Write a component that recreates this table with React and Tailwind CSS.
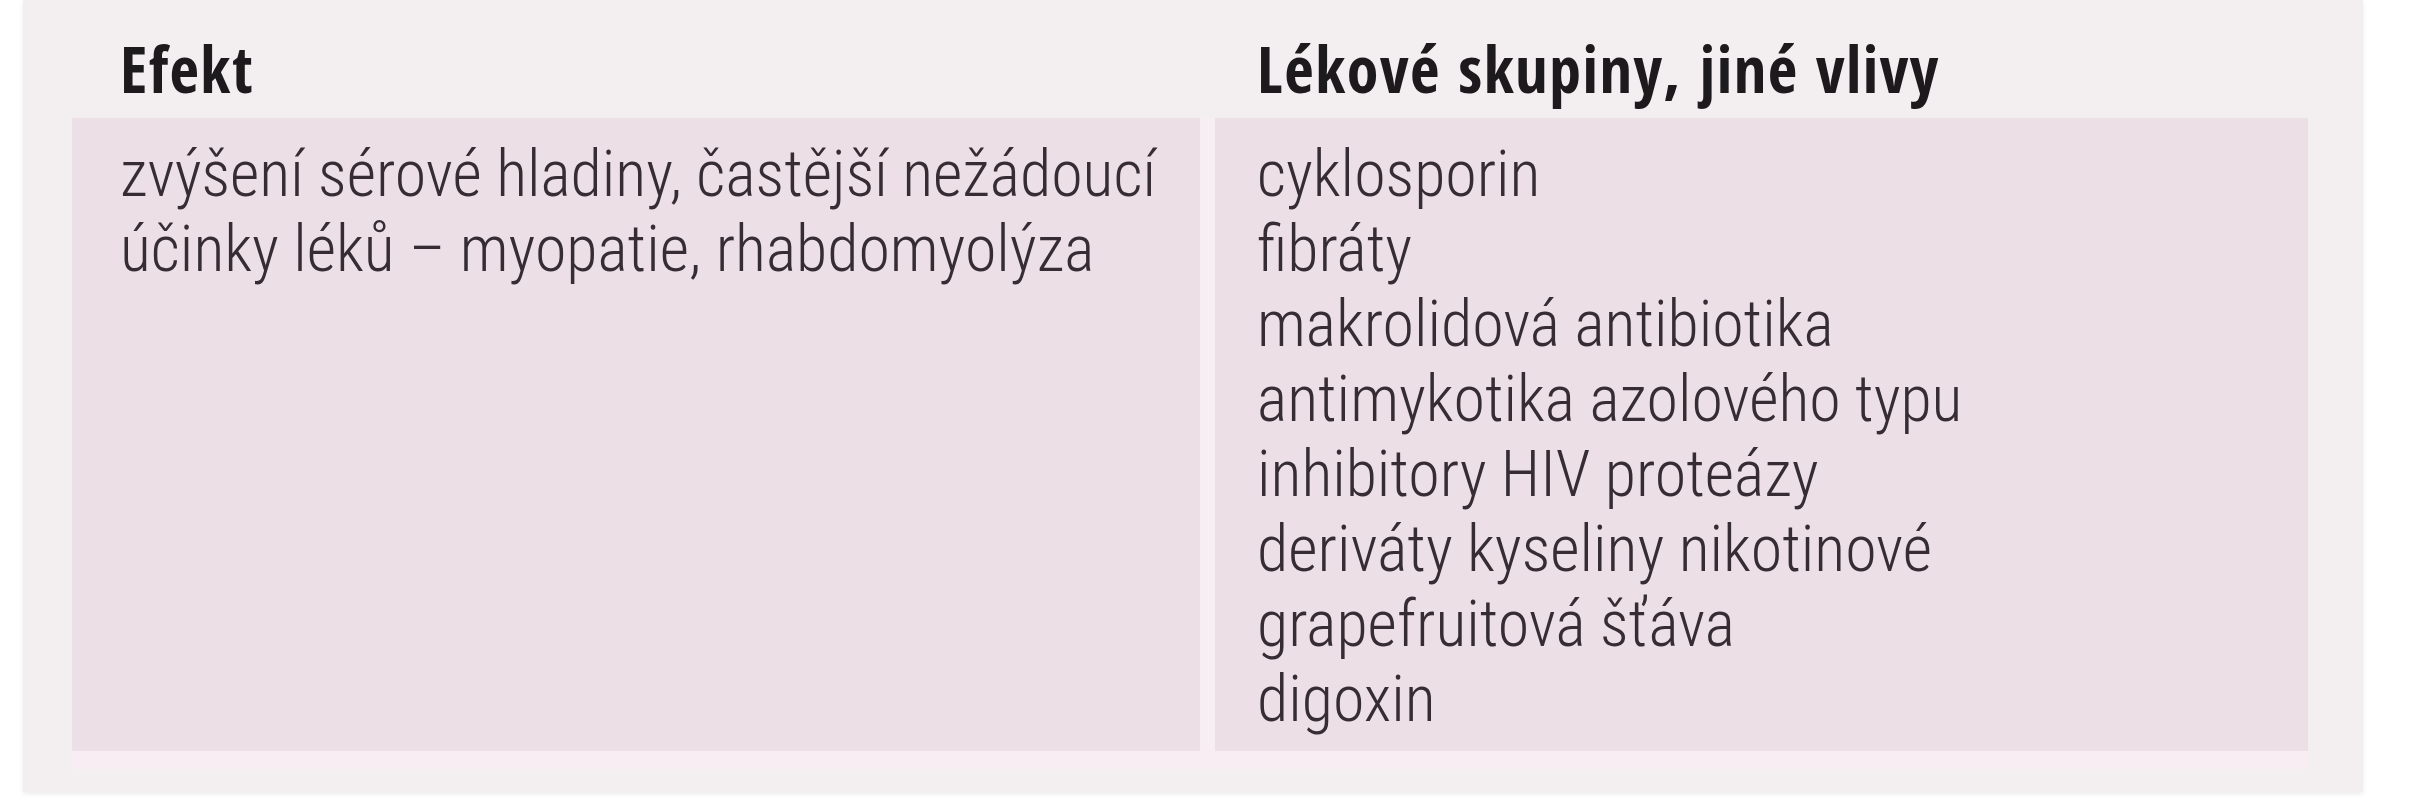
const effects = ["zvýšení sérové hladiny, častější nežádoucí", "účinky léků – myopatie, rhabdomyolýza"];

const groups = [
  "cyklosporin",
  "fibráty",
  "makrolidová antibiotika",
  "antimykotika azolového typu",
  "inhibitory HIV proteázy",
  "deriváty kyseliny nikotinové",
  "grapefruitová šťáva",
  "digoxin",
];

export default function App() {
  return (
    <div className="w-[2409px] h-[800px] bg-white">
      <div className="ml-[23px] w-[2340px] h-[792px] bg-[#f3eff1] pl-[49px] pr-[55px] shadow-[0_2px_5px_rgba(0,0,0,0.08)] flex flex-col">
        {/* header row */}
        <div className="grid grid-cols-[1128px_1093px] gap-x-[15px] h-[118px] items-end pb-[6px] font-['Open_Sans_Condensed','Open_Sans',sans-serif] text-[64px] leading-[87px] font-bold tracking-[1.5px] text-[#1c1a1d]">
          <div className="pl-[48px]">Efekt</div>
          <div className="pl-[42px]">Lékové skupiny, jiné vlivy</div>
        </div>

        {/* body row */}
        <div className="grid grid-cols-[1128px_1093px] gap-x-[15px] bg-[#f6eef2] font-['Roboto_Condensed','Liberation_Sans',sans-serif] text-[64px] leading-[75px] font-light text-[#352d33]">
          <div className="bg-[#ecdfe5] pl-[48px] pt-[19px] pb-[14px]">
            {effects.map((t) => (
              <div key={t}>{t}</div>
            ))}
          </div>
          <div className="bg-[#ecdfe5] pl-[42px] pt-[19px] pb-[14px]">
            {groups.map((t) => (
              <div key={t}>{t}</div>
            ))}
          </div>
        </div>
        <div className="h-[18px] w-[2236px] bg-[#f7edf2]" />
      </div>
    </div>
  );
}
